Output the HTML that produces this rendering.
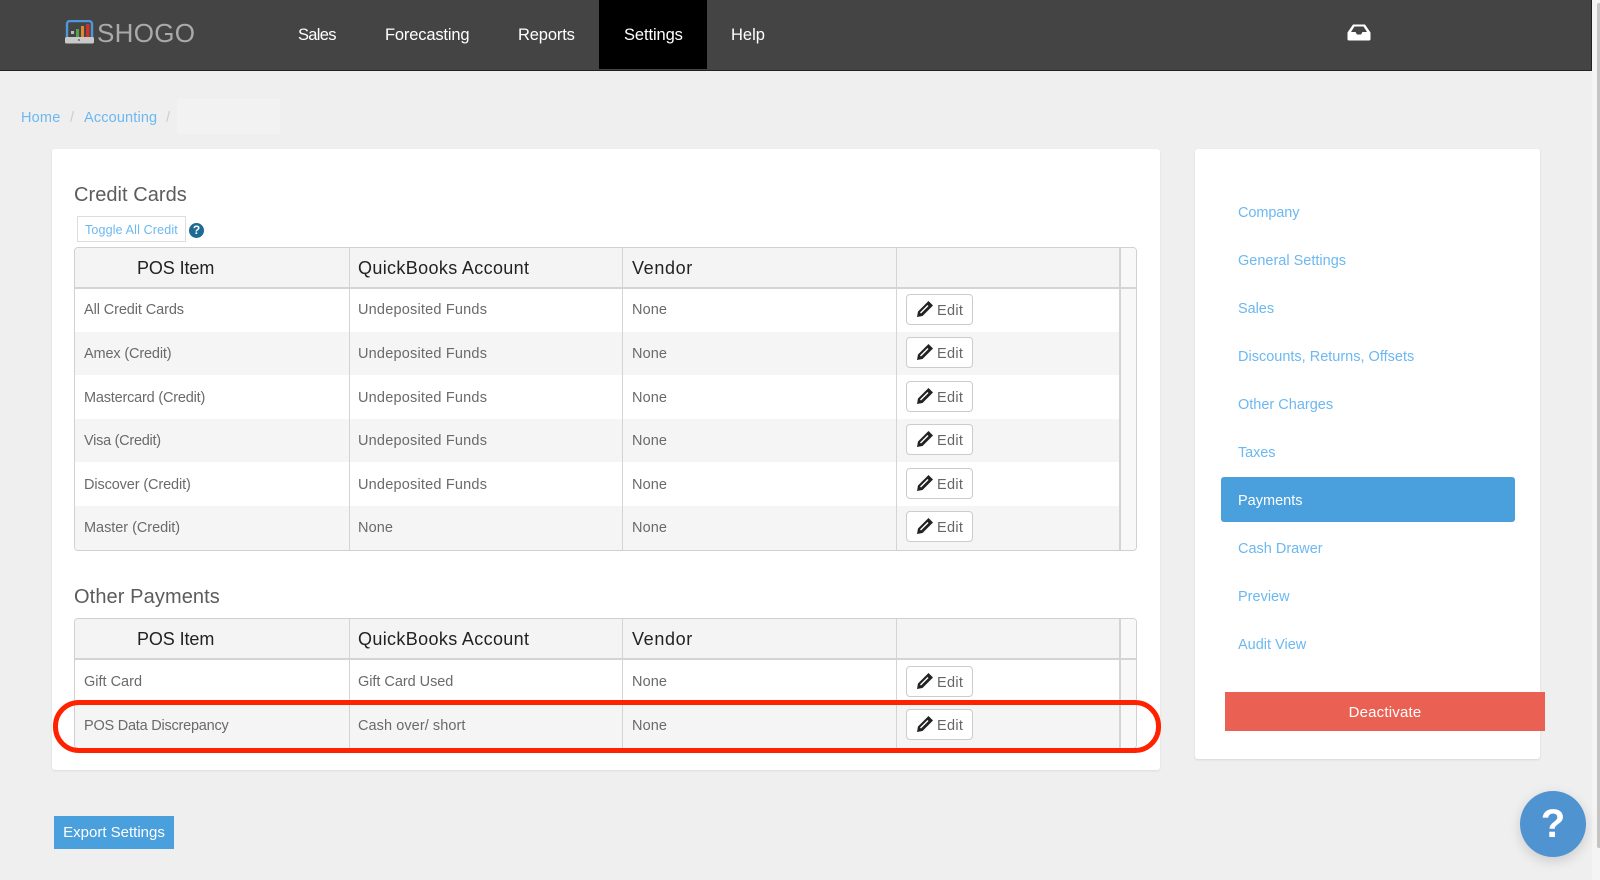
<!DOCTYPE html>
<html><head><meta charset="utf-8"><style>
html,body{margin:0;padding:0;width:1600px;height:880px;overflow:hidden;background:#efefef;font-family:"Liberation Sans",sans-serif}
.a{position:absolute;white-space:nowrap}
.t{position:absolute;white-space:nowrap;line-height:20px;height:20px}
.nav{color:#fff;font-size:16.5px;letter-spacing:-.1px;top:25px}
.lnk{color:#6cb8f0;font-size:14.5px;letter-spacing:0;left:1238px}
.h{color:#5c5c5c;font-size:20px;letter-spacing:.05px;left:74px}
.th{color:#222;font-size:18px;letter-spacing:.35px}
.td{color:#6a6a6a;font-size:14.5px;letter-spacing:-.1px}
.c2{letter-spacing:.2px}
.line{position:absolute;background:#d4d4d4}
.edit{position:absolute;left:906px;width:65px;height:29px;border:1px solid #ccc;border-radius:4px;background:#fff}
.edit span{position:absolute;left:30px;top:6px;font-size:14.5px;letter-spacing:.3px;color:#666;line-height:20px}
.edit svg{position:absolute;left:9px;top:5px}
</style></head><body>
<div class="a" style="left:0;top:0;width:1592px;height:70px;background:#444;border-bottom:1px solid #222"></div>
<div class="a" style="left:1591px;top:0;width:1px;height:71px;background:#222"></div>
<div class="a" style="left:1592px;top:0;width:8px;height:880px;background:#f4f4f4"></div>
<div class="a" style="left:1597px;top:3px;width:3px;height:845px;background:#c4c4c4;border-radius:2px 0 0 2px"></div>
<div class="a" style="left:599px;top:0;width:108px;height:69px;background:#000"></div>
<svg class="a" style="left:65px;top:20px" width="30" height="24" viewBox="0 0 30 24"><path d="M2 18V4a3 3 0 0 1 3-3h19a3 3 0 0 1 3 3v14" fill="none" stroke="#4f97d8" stroke-width="2.4"/><rect x="6" y="11" width="3" height="3" fill="#bbb"/><rect x="11" y="9" width="3" height="8" fill="#5a9e4c"/><rect x="16" y="6" width="3" height="11" fill="#e08a2e"/><rect x="21" y="4" width="3.500" height="13" fill="#c9342c"/><rect x="0" y="17" width="29" height="6.500" rx="1.500" fill="#c9c9c9"/><circle cx="14" cy="20" r="1" fill="#666"/></svg>
<div class="t" style="left:97px;top:21px;height:24px;line-height:24px;color:#aaa;font-size:26px;letter-spacing:.3px">SHOGO</div>
<div class="t nav" style="left:298px;letter-spacing:-.7px">Sales</div>
<div class="t nav" style="left:385px;letter-spacing:-.17px">Forecasting</div>
<div class="t nav" style="left:518px;letter-spacing:-.14px">Reports</div>
<div class="t nav" style="left:624px">Settings</div>
<div class="t nav" style="left:731px;letter-spacing:0">Help</div>
<svg class="a" style="left:1347px;top:24px" width="24" height="17" viewBox="0 0 24 17"><path d="M6 0.500h12L23.500 8.500V15a1.500 1.500 0 0 1-1.500 1.500H2A1.500 1.500 0 0 1 .5 15V8.500Z" fill="#fff"/><path d="M7.500 2.500h9l3.500 5.500h-4.500l-1.500 2.500h-4L8.500 8H4Z" fill="#444"/></svg>

<div class="t lnk" style="left:21px;top:108px;letter-spacing:.2px">Home</div>
<div class="t" style="left:70px;top:108px;color:#ccc;font-size:14.5px">/</div>
<div class="t lnk" style="left:84px;top:108px;letter-spacing:.15px">Accounting</div>
<div class="t" style="left:166px;top:108px;color:#ccc;font-size:14.5px">/</div>
<div class="a" style="left:177px;top:99px;width:103px;height:35px;background:#f2f2f2"></div>

<div class="a" style="left:52px;top:149px;width:1108px;height:621px;background:#fff;border-radius:3px;box-shadow:0 1px 2px rgba(0,0,0,.08)"></div>
<div class="a" style="left:1195px;top:149px;width:345px;height:610px;background:#fff;border-radius:3px;box-shadow:0 1px 2px rgba(0,0,0,.1)"></div>

<div class="t h" style="top:185px">Credit Cards</div>
<div class="a" style="left:77px;top:216px;width:107px;height:24px;border:1px solid #ddd;background:#fff"></div>
<div class="t" style="left:85px;top:220px;color:#6cb8f0;font-size:12.500px;letter-spacing:.15px">Toggle All Credit</div>
<div class="a" style="left:189px;top:223px;width:15px;height:15px;border-radius:50%;background:#1f6a94;color:#fff;font-size:12px;font-weight:bold;line-height:15px;text-align:center">?</div>

<!-- table 1 -->
<div class="a" style="left:74px;top:247px;width:1061px;height:302px;border:1px solid #d0d0d0;border-radius:4px;background:#fff;overflow:hidden">
 <div class="a" style="left:0;top:0;width:1061px;height:39px;background:#f4f4f4"></div>
 <div class="a" style="left:0;top:84px;width:1045px;height:43px;background:#f5f5f5"></div>
 <div class="a" style="left:0;top:171px;width:1045px;height:43px;background:#f5f5f5"></div>
 <div class="a" style="left:0;top:258px;width:1045px;height:44px;background:#f5f5f5"></div>
 <div class="a" style="left:1045px;top:0;width:16px;height:302px;background:#f8f8f8"></div>
 <div class="line" style="left:0;top:39px;width:1061px;height:2px"></div>
 <div class="line" style="left:274px;top:0;width:1px;height:302px"></div>
 <div class="line" style="left:547px;top:0;width:1px;height:302px"></div>
 <div class="line" style="left:821px;top:0;width:1px;height:302px"></div>
 <div class="line" style="left:1044px;top:0;width:2px;height:302px"></div>
</div>
<div class="t th" style="left:137px;top:258px;letter-spacing:-.1px">POS Item</div>
<div class="t th" style="left:358px;top:258px">QuickBooks Account</div>
<div class="t th" style="left:632px;top:258px;letter-spacing:.65px">Vendor</div>

<div class="t td" style="left:84px;top:300px">All Credit Cards</div><div class="t td c2" style="left:358px;top:300px">Undeposited Funds</div><div class="t td" style="left:632px;top:300px;letter-spacing:.1px">None</div>
<div class="t td" style="left:84px;top:344px;letter-spacing:-.15px">Amex (Credit)</div><div class="t td c2" style="left:358px;top:344px">Undeposited Funds</div><div class="t td" style="left:632px;top:344px;letter-spacing:.1px">None</div>
<div class="t td" style="left:84px;top:388px;letter-spacing:-.2px">Mastercard (Credit)</div><div class="t td c2" style="left:358px;top:388px">Undeposited Funds</div><div class="t td" style="left:632px;top:388px;letter-spacing:.1px">None</div>
<div class="t td" style="left:84px;top:431px;letter-spacing:-.27px">Visa (Credit)</div><div class="t td c2" style="left:358px;top:431px">Undeposited Funds</div><div class="t td" style="left:632px;top:431px;letter-spacing:.1px">None</div>
<div class="t td" style="left:84px;top:475px;letter-spacing:-.12px">Discover (Credit)</div><div class="t td c2" style="left:358px;top:475px">Undeposited Funds</div><div class="t td" style="left:632px;top:475px;letter-spacing:.1px">None</div>
<div class="t td" style="left:84px;top:518px;letter-spacing:-.04px">Master (Credit)</div><div class="t td" style="left:358px;top:518px;letter-spacing:.1px">None</div><div class="t td" style="left:632px;top:518px;letter-spacing:.1px">None</div>

<div class="edit" style="top:294px"><svg width="18" height="18" viewBox="0 0 18 18"><path d="M1 17l1-5.500L12.500 1l4.500 4.500L6.500 16Z" fill="#222"/><path d="M4 12.500l7.500-7.500 1 1-7.500 7.500Z" fill="#fff"/></svg><span>Edit</span></div>
<div class="edit" style="top:337px"><svg width="18" height="18" viewBox="0 0 18 18"><path d="M1 17l1-5.500L12.500 1l4.500 4.500L6.500 16Z" fill="#222"/><path d="M4 12.500l7.500-7.500 1 1-7.500 7.500Z" fill="#fff"/></svg><span>Edit</span></div>
<div class="edit" style="top:381px"><svg width="18" height="18" viewBox="0 0 18 18"><path d="M1 17l1-5.500L12.500 1l4.500 4.500L6.500 16Z" fill="#222"/><path d="M4 12.500l7.500-7.500 1 1-7.500 7.500Z" fill="#fff"/></svg><span>Edit</span></div>
<div class="edit" style="top:424px"><svg width="18" height="18" viewBox="0 0 18 18"><path d="M1 17l1-5.500L12.500 1l4.500 4.500L6.500 16Z" fill="#222"/><path d="M4 12.500l7.500-7.500 1 1-7.500 7.500Z" fill="#fff"/></svg><span>Edit</span></div>
<div class="edit" style="top:468px"><svg width="18" height="18" viewBox="0 0 18 18"><path d="M1 17l1-5.500L12.500 1l4.500 4.500L6.500 16Z" fill="#222"/><path d="M4 12.500l7.500-7.500 1 1-7.500 7.500Z" fill="#fff"/></svg><span>Edit</span></div>
<div class="edit" style="top:511px"><svg width="18" height="18" viewBox="0 0 18 18"><path d="M1 17l1-5.500L12.500 1l4.500 4.500L6.500 16Z" fill="#222"/><path d="M4 12.500l7.500-7.500 1 1-7.500 7.500Z" fill="#fff"/></svg><span>Edit</span></div>

<div class="t h" style="top:587px;letter-spacing:.1px">Other Payments</div>
<!-- table 2 -->
<div class="a" style="left:74px;top:618px;width:1061px;height:129px;border:1px solid #d0d0d0;border-radius:4px;background:#fff;overflow:hidden">
 <div class="a" style="left:0;top:0;width:1061px;height:39px;background:#f4f4f4"></div>
 <div class="a" style="left:0;top:85px;width:1045px;height:44px;background:#f5f5f5"></div>
 <div class="a" style="left:1045px;top:0;width:16px;height:129px;background:#f8f8f8"></div>
 <div class="line" style="left:0;top:39px;width:1061px;height:2px"></div>
 <div class="line" style="left:274px;top:0;width:1px;height:129px"></div>
 <div class="line" style="left:547px;top:0;width:1px;height:129px"></div>
 <div class="line" style="left:821px;top:0;width:1px;height:129px"></div>
 <div class="line" style="left:1044px;top:0;width:2px;height:129px"></div>
</div>
<div class="t th" style="left:137px;top:629px;letter-spacing:-.1px">POS Item</div>
<div class="t th" style="left:358px;top:629px">QuickBooks Account</div>
<div class="t th" style="left:632px;top:629px;letter-spacing:.65px">Vendor</div>
<div class="t td" style="left:84px;top:672px;letter-spacing:0">Gift Card</div><div class="t td" style="left:358px;top:672px;letter-spacing:-.04px">Gift Card Used</div><div class="t td" style="left:632px;top:672px;letter-spacing:.1px">None</div>
<div class="t td" style="left:84px;top:716px;letter-spacing:-.23px">POS Data Discrepancy</div><div class="t td" style="left:358px;top:716px;letter-spacing:.07px">Cash over/ short</div><div class="t td" style="left:632px;top:716px;letter-spacing:.1px">None</div>
<div class="edit" style="top:666px"><svg width="18" height="18" viewBox="0 0 18 18"><path d="M1 17l1-5.500L12.500 1l4.500 4.500L6.500 16Z" fill="#222"/><path d="M4 12.500l7.500-7.500 1 1-7.500 7.500Z" fill="#fff"/></svg><span>Edit</span></div>
<div class="edit" style="top:709px"><svg width="18" height="18" viewBox="0 0 18 18"><path d="M1 17l1-5.500L12.500 1l4.500 4.500L6.500 16Z" fill="#222"/><path d="M4 12.500l7.500-7.500 1 1-7.500 7.500Z" fill="#fff"/></svg><span>Edit</span></div>

<div class="a" style="left:53px;top:700px;width:1098px;height:43px;border:5px solid #ff2200;border-radius:26px"></div>

<div class="a" style="left:54px;top:816px;width:120px;height:33px;background:#4a9fdd;color:#fff;font-size:15px;letter-spacing:0;line-height:34px;text-align:center">Export Settings</div>

<div class="t lnk" style="top:203px;letter-spacing:-.1px">Company</div>
<div class="t lnk" style="top:251px">General Settings</div>
<div class="t lnk" style="top:299px;letter-spacing:-.05px">Sales</div>
<div class="t lnk" style="top:347px">Discounts, Returns, Offsets</div>
<div class="t lnk" style="top:395px">Other Charges</div>
<div class="t lnk" style="top:443px;letter-spacing:-.1px">Taxes</div>
<div class="a" style="left:1221px;top:477px;width:294px;height:45px;background:#4a9fdd;border-radius:3px"></div>
<div class="t lnk" style="top:491px;color:#fff">Payments</div>
<div class="t lnk" style="top:539px">Cash Drawer</div>
<div class="t lnk" style="top:587px">Preview</div>
<div class="t lnk" style="top:635px">Audit View</div>

<div class="a" style="left:1225px;top:692px;width:320px;height:39px;background:#ea6153;color:#fff;font-size:15px;letter-spacing:.2px;line-height:41px;text-align:center">Deactivate</div>

<div class="a" style="left:1520px;top:791px;width:66px;height:66px;border-radius:50%;background:#5093d1;box-shadow:0 4px 12px rgba(0,0,0,.15);color:#fff;font-size:40px;font-weight:bold;line-height:66px;text-align:center">?</div>
</body></html>
